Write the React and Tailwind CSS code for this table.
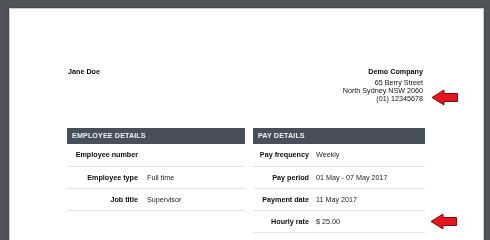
import React from "react";

// Left-pointing red callout arrow
function Arrow({ className }) {
  return (
    <svg
      className={className}
      width="28"
      height="17"
      viewBox="0 0 28 17"
      xmlns="http://www.w3.org/2000/svg"
    >
      <polygon
        points="1,8.5 13,1 13,4.5 26.5,4.5 26.5,12.5 13,12.5 13,16"
        fill="#e5161c"
        stroke="#7a0b0e"
        strokeWidth="1"
        strokeLinejoin="miter"
      />
    </svg>
  );
}

function Row({ label, value, labelW, gap, first }) {
  return (
    <div
      className={`flex items-center border-b border-[#e4e4e4] ${
        first ? "h-[23px]" : "h-[22px]"
      }`}
    >
      <div
        className="text-right font-bold text-[#0a0a0a]"
        style={{ width: labelW }}
      >
        {label}
      </div>
      <div className="text-[#1c1c1c]" style={{ paddingLeft: gap }}>
        {value}
      </div>
    </div>
  );
}

function Section({ title, rows, labelW, gap, className }) {
  return (
    <div className={className}>
      <div className="h-[16px] bg-[#47505a] pl-[5px] flex items-center font-bold text-[#eef0f2] tracking-[0.1px]">
        {title}
      </div>
      {rows.map((r, i) => (
        <Row
          key={r[0]}
          label={r[0]}
          value={r[1]}
          labelW={labelW}
          gap={gap}
          first={i === 0}
        />
      ))}
    </div>
  );
}

export default function App() {
  return (
    <div className="w-[490px] h-[240px] overflow-hidden bg-[#505459] pt-[8px] pl-[9px] font-['Liberation_Sans',Arial,sans-serif] text-[7.2px] leading-[8px] antialiased">
      <div className="relative w-[475px] h-[260px] bg-white border border-[#c9cbcd] shadow-[0_0_2px_rgba(0,0,0,0.35)] [transform:translateZ(0)] [will-change:transform]">
        <div className="ml-[57px] w-[358px] pt-[59px]">
          {/* Payslip header: employee name and employer address */}
          <div className="flex justify-between">
            <div className="pl-[1px] font-bold text-[#0a0a0a]">Jane Doe</div>
            <div className="pr-[2px] text-right text-[#111]">
              <div className="font-bold text-[#0a0a0a] mb-[3px]">Demo Company</div>
              <div>65 Berry Street</div>
              <div>North Sydney NSW 2060</div>
              <div>(01) 12345678</div>
            </div>
          </div>

          <div className="flex gap-[8px] mt-[25px]">
            <Section
              className="w-[178px]"
              title="EMPLOYEE DETAILS"
              labelW={71}
              gap={9}
              rows={[
                ["Employee number", ""],
                ["Employee type", "Full time"],
                ["Job title", "Supervisor"],
              ]}
            />
            <Section
              className="flex-1"
              title="PAY DETAILS"
              labelW={56}
              gap={7}
              rows={[
                ["Pay frequency", "Weekly"],
                ["Pay period", "01 May - 07 May 2017"],
                ["Payment date", "11 May 2017"],
                ["Hourly rate", "$ 25.00"],
              ]}
            />
          </div>
        </div>

        <Arrow className="absolute left-[421px] top-[80px]" />
        <Arrow className="absolute left-[420px] top-[204px]" />
      </div>
    </div>
  );
}
